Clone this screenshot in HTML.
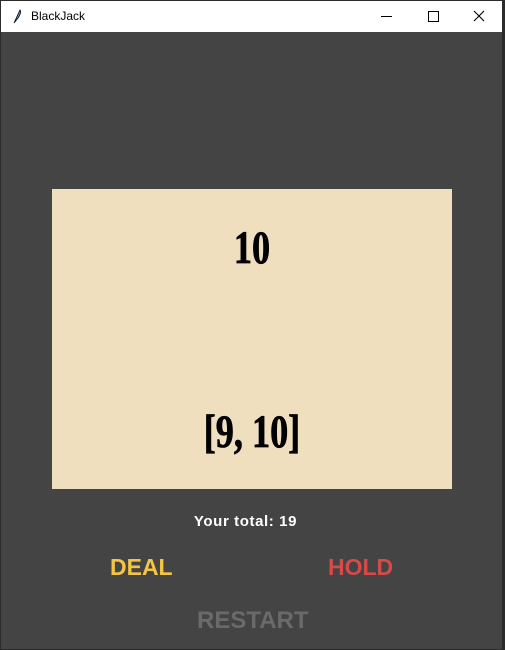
<!DOCTYPE html>
<html><head><meta charset="utf-8"><style>
body{margin:0;width:505px;height:650px;background:#2b2b2b;position:relative;overflow:hidden;font-family:"Liberation Sans",sans-serif}
#win{position:absolute;left:1px;top:1px;width:501px;height:648px;background:#444444}
#tb{position:absolute;left:0;top:0;width:501px;height:31px;background:#fff}
#tb .t{position:absolute;left:30px;top:8px;font-size:12px;color:#000}
.abs{position:absolute;white-space:nowrap}
#card{position:absolute;left:51px;top:188px;width:400px;height:300px;background:#efdfbf}
.num{font-family:"Liberation Serif",serif;font-weight:bold;color:#000;transform:scaleX(0.77);transform-origin:center;-webkit-text-stroke:0.8px #000}
</style></head><body>
<div id="win">
<div id="tb"><svg class="abs" style="left:11px;top:7px" width="10" height="16" viewBox="0 0 10 16"><path d="M2 15 L8 2 Q10 4 6 10 Z" fill="#6a9ad8" stroke="#000" stroke-width="0.8"/></svg>
<span class="t">BlackJack</span>
<div class="abs" style="left:380px;top:15px;width:11px;height:1px;background:#000"></div>
<div class="abs" style="left:427px;top:10px;width:9px;height:9px;border:1px solid #000"></div>
<svg class="abs" style="left:472px;top:9px" width="12" height="12"><path d="M1 1L11 11M11 1L1 11" stroke="#000" stroke-width="1.1"/></svg>
</div>
<div id="card">
<div class="abs num" style="left:0;width:400px;text-align:center;top:32px;font-size:47px">10</div>
<div class="abs num" style="left:0;width:400px;text-align:center;top:216px;font-size:47px">[9, 10]</div>
</div>
<div class="abs" style="left:-6px;width:501px;text-align:center;top:512px;font-size:15px;font-weight:bold;color:#fff;letter-spacing:0.6px">Your total: 19</div>
<div class="abs" style="left:109px;top:553px;font-size:23px;font-weight:bold;color:#f4c542">DEAL</div>
<div class="abs" style="left:327px;top:553px;font-size:23px;font-weight:bold;color:#d64a4a">HOLD</div>
<div class="abs" style="left:196px;top:606px;font-size:24px;font-weight:bold;color:#6a6a6a">RESTART</div>
</div>
</body></html>
